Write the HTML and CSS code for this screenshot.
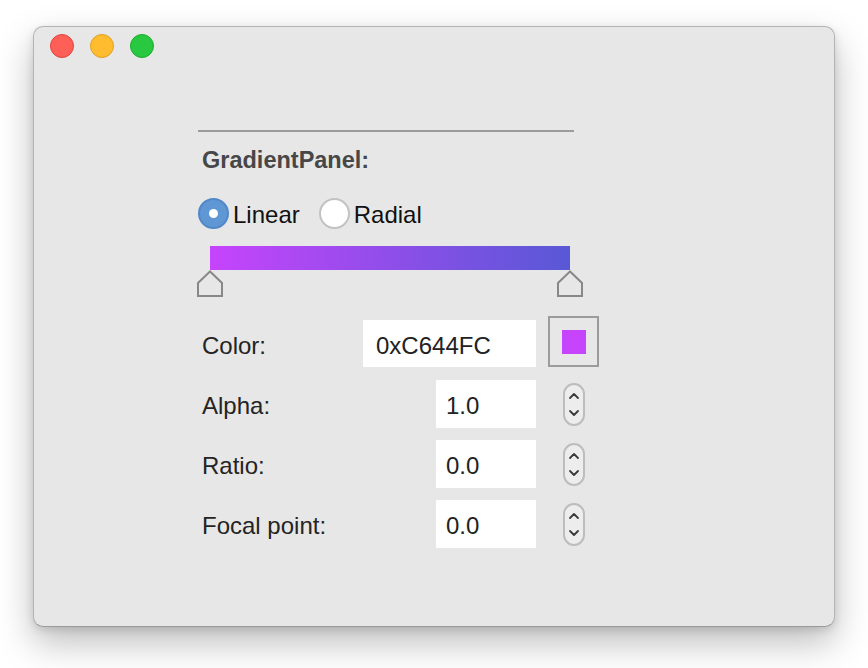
FILE: index.html
```html
<!DOCTYPE html>
<html>
<head>
<meta charset="utf-8">
<link rel="stylesheet" href="styles.css">
</head>
<body>
<div class="window">
  <div class="titlebar">
    <span class="light red"></span>
    <span class="light yellow"></span>
    <span class="light green"></span>
  </div>
  <div class="panel">
    <div class="separator"></div>
    <div class="title">GradientPanel:</div>
    <div class="radios">
      <span class="radio checked"></span><span class="radio-label">Linear</span>
      <span class="radio"></span><span class="radio-label">Radial</span>
    </div>
    <div class="gradient-bar"></div>
    <div class="thumbs">
      <svg class="thumb" width="26" height="27" viewBox="0 0 26 27"><path d="M13 1.5 L1 13 L1 26 L25 26 L25 13 Z" fill="none" stroke="#888" stroke-width="2" stroke-linejoin="miter"/></svg>
      <svg class="thumb" width="26" height="27" viewBox="0 0 26 27"><path d="M13 1.5 L1 13 L1 26 L25 26 L25 13 Z" fill="none" stroke="#888" stroke-width="2" stroke-linejoin="miter"/></svg>
    </div>
    <div class="row row-color">
      <div class="label">Color:</div>
      <div class="field field-wide">0xC644FC</div>
      <div class="control">
        <div class="swatch"><div class="swatch-inner"></div></div>
      </div>
    </div>
    <div class="row">
      <div class="label">Alpha:</div>
      <div class="field">1.0</div>
      <div class="control">
        <div class="stepper">
          <svg width="12" height="8" viewBox="0 0 12 8"><path d="M2 6 L6 2 L10 6" fill="none" stroke="#3a3a3a" stroke-width="1.8" stroke-linecap="round" stroke-linejoin="round"/></svg>
          <svg width="12" height="8" viewBox="0 0 12 8"><path d="M2 2 L6 6 L10 2" fill="none" stroke="#3a3a3a" stroke-width="1.8" stroke-linecap="round" stroke-linejoin="round"/></svg>
        </div>
      </div>
    </div>
    <div class="row">
      <div class="label">Ratio:</div>
      <div class="field">0.0</div>
      <div class="control">
        <div class="stepper">
          <svg width="12" height="8" viewBox="0 0 12 8"><path d="M2 6 L6 2 L10 6" fill="none" stroke="#3a3a3a" stroke-width="1.8" stroke-linecap="round" stroke-linejoin="round"/></svg>
          <svg width="12" height="8" viewBox="0 0 12 8"><path d="M2 2 L6 6 L10 2" fill="none" stroke="#3a3a3a" stroke-width="1.8" stroke-linecap="round" stroke-linejoin="round"/></svg>
        </div>
      </div>
    </div>
    <div class="row">
      <div class="label">Focal point:</div>
      <div class="field">0.0</div>
      <div class="control">
        <div class="stepper">
          <svg width="12" height="8" viewBox="0 0 12 8"><path d="M2 6 L6 2 L10 6" fill="none" stroke="#3a3a3a" stroke-width="1.8" stroke-linecap="round" stroke-linejoin="round"/></svg>
          <svg width="12" height="8" viewBox="0 0 12 8"><path d="M2 2 L6 6 L10 2" fill="none" stroke="#3a3a3a" stroke-width="1.8" stroke-linecap="round" stroke-linejoin="round"/></svg>
        </div>
      </div>
    </div>
  </div>
</div>
</body>
</html>
```
FILE: styles.css
```css
* { box-sizing: border-box; }
html, body { margin: 0; padding: 0; background: #ffffff; }
body {
  min-height: 668px;
  padding: 26px 0 0 33px;
  font-family: "Liberation Sans", Arial, sans-serif;
  font-size: 24px;
  color: #222;
}
.window {
  width: 802px;
  height: 601px;
  background: #e7e7e7;
  border: 1px solid #b4b4b4;
  border-bottom-color: #9a9a9a;
  border-radius: 10px;
  box-shadow: 0 16px 36px rgba(0,0,0,0.26), 0 3px 8px rgba(0,0,0,0.12);
}
.titlebar {
  display: flex;
  gap: 16px;
  padding: 7px 0 0 16px;
  height: 31px;
}
.light {
  width: 24px;
  height: 24px;
  border-radius: 50%;
  border: 1px solid;
}
.red { background: #fe5f57; border-color: #e0443e; }
.yellow { background: #febc2e; border-color: #dfa023; }
.green { background: #28c840; border-color: #1dad2b; }

.panel {
  margin: 72px 0 0 164px;
  width: 401px;
}
.separator {
  width: 376px;
  height: 2px;
  background: #9c9c9c;
}
.title {
  margin-top: 15px;
  padding-left: 4px;
  line-height: 27px;
  font-size: 23.5px;
  font-weight: bold;
  color: #474747;
}
.radios {
  margin-top: 24px;
  display: flex;
  align-items: center;
  height: 31px;
  color: #111;
}
.radio {
  width: 31px;
  height: 31px;
  border-radius: 50%;
  background: #fff;
  border: 2px solid #c2c2c2;
  display: flex;
  align-items: center;
  justify-content: center;
}
.radio.checked {
  background: #5f97d5;
  border-color: #5288c8;
}
.radio.checked::after {
  content: "";
  width: 9px;
  height: 9px;
  border-radius: 50%;
  background: #fff;
}
.radio-label {
  margin-left: 4px;
  margin-right: 19px;
  line-height: 27px;
  padding-top: 2px;
}
.gradient-bar {
  margin: 17px 0 0 12px;
  width: 360px;
  height: 24px;
  background: linear-gradient(to right, #c644fc, #5858d6);
}
.thumbs {
  display: flex;
  justify-content: space-between;
  width: 386px;
  margin-left: -1px;
  height: 27px;
}
.thumb { display: block; }

.row {
  display: flex;
  align-items: center;
  height: 48px;
  margin-top: 12px;
  padding-left: 4px;
}
.row-color {
  height: 51px;
  margin-top: 19px;
  align-items: flex-end;
}
.row-color + .row { margin-top: 13px; }
.label {
  flex: 1;
  height: 48px;
  display: flex;
  align-items: center;
  padding-top: 4px;
  color: #242424;
}
.field {
  width: 100px;
  height: 48px;
  background: #fff;
  display: flex;
  align-items: center;
  padding: 4px 0 0 10px;
  color: #222;
}
.row-color .label,
.row-color .field {
  height: 47px;
  padding-top: 5px;
}
.field-wide {
  width: 173px;
  padding-left: 13px;
}
.control {
  width: 51px;
  margin-left: 12px;
  display: flex;
  align-items: center;
  justify-content: center;
  align-self: stretch;
}
.swatch {
  width: 51px;
  height: 51px;
  border: 2px solid #9c9c9c;
  display: flex;
  align-items: center;
  justify-content: center;
}
.swatch-inner {
  width: 24px;
  height: 24px;
  background: #c644fc;
}
.stepper {
  width: 22px;
  height: 43px;
  border: 2px solid #bdbdbd;
  border-radius: 11px;
  background: #ededed;
  display: flex;
  flex-direction: column;
  align-items: center;
  justify-content: center;
  gap: 9px;
}
.stepper svg { display: block; }
```
